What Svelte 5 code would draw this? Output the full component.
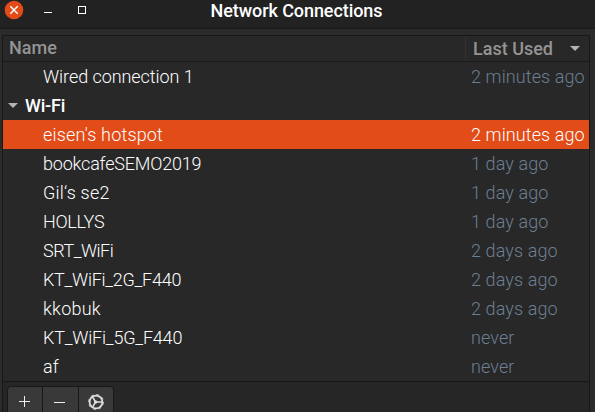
<script>
  const rows = [
    { name: 'Wired connection 1', used: '2 minutes ago', tracking: -0.06 },
    { name: 'Wi-Fi', group: true, tracking: -0.2 },
    { name: "eisen's hotspot", used: '2 minutes ago', selected: true, tracking: 0.18 },
    { name: 'bookcafeSEMO2019', used: '1 day ago', tracking: -0.19 },
    { name: 'Gil‘s se2', used: '1 day ago', tracking: 0.2 },
    { name: 'HOLLYS', used: '1 day ago', tracking: -0.3 },
    { name: 'SRT_WiFi', used: '2 days ago', tracking: -0.5 },
    { name: 'KT_WiFi_2G_F440', used: '2 days ago', tracking: -0.27 },
    { name: 'kkobuk', used: '2 days ago', tracking: 0.25 },
    { name: 'KT_WiFi_5G_F440', used: 'never', tracking: -0.2 },
    { name: 'af', used: 'never', tracking: 0 }
  ];
</script>

<div class="window">
  <header class="titlebar">
    <div class="controls">
      <button class="close" aria-label="Close">
        <svg width="20" height="20" viewBox="0 0 20 20"><circle cx="10" cy="10" r="9.3" fill="#e24c19" /><path d="M6.3 6.3l7.4 7.4M13.7 6.3l-7.4 7.4" stroke="#fff" stroke-width="1.5" /></svg>
      </button>
      <button class="min" aria-label="Minimize"><svg width="8" height="1"><path d="M0 .5h8" stroke="#fff" /></svg></button>
      <button class="max" aria-label="Maximize"><svg width="8" height="8"><rect x=".5" y=".5" width="7" height="7" fill="none" stroke="#fff" /></svg></button>
    </div>
    <h1>Network Connections</h1>
    <div class="balance"></div>
  </header>

  <main>
    <div class="columns">
      <div class="col-name">Name</div>
      <div class="col-used">Last Used <i class="arrow"></i></div>
    </div>
    <div class="list">
      {#each rows as row}
        <div class="row" class:selected={row.selected} class:group={row.group}>
          {#if row.group}<i class="arrow"></i>{/if}
          <span class="name" style:letter-spacing="{row.tracking}px">{row.name}</span>
          <span class="used">{row.used ?? ''}</span>
        </div>
      {/each}
    </div>
    <footer>
      <div class="buttons">
        <button aria-label="Add"><svg width="13" height="12"><path d="M0 5.5h11M5.5 0v11" stroke="#eee" /></svg></button>
        <button aria-label="Remove"><svg width="12" height="12"><path d="M0 6.5h11" stroke="#eee" /></svg></button>
        <button aria-label="Settings">
          <svg width="16" height="16" viewBox="0 0 16 16" fill="none" stroke="#ddd">
            <circle cx="8" cy="8" r="6.4" stroke-width="1.8" />
            <circle cx="8" cy="8" r="7.5" stroke-width=".8" stroke-dasharray="3 2.89" />
            <path d="M7.6 8H14M7.6 8L4.6 3M7.6 8L4.6 13" stroke-width="1.5" />
            <circle cx="7.6" cy="8" r="1.7" fill="#ddd" stroke="none" />
          </svg>
        </button>
      </div>
    </footer>
  </main>
</div>

<style>
  :global(body) { overflow: hidden; }
  .window {
    box-sizing: border-box; width: 595px; height: 412px; overflow: hidden;
    background: #2b2b2b; color: #fff;
    font: 300 18px/29px Roboto, "Liberation Sans", sans-serif;
    white-space: nowrap;
  }
  button { all: unset; display: flex; box-sizing: border-box; }
  svg { display: block; }
  .titlebar {
    height: 29px; box-sizing: border-box; display: flex;
    background: #222; border-bottom: 1px solid #181818;
  }
  .controls, .balance { width: 140px; display: flex; }
  .balance { width: 142px; }
  .close { margin-left: 4px; height: 20px; }
  .min { margin: 12px 0 0 20px; height: 1px; }
  .max { margin: 6px 0 0 26px; height: 8px; }
  h1 { flex: 1; margin: 0; font-size: 18px; font-weight: 500; letter-spacing: -.07px; line-height: 22px; text-align: center; color: #fff; }
  main {
    box-sizing: border-box; width: 588px; height: 377px; margin: 6px 0 0 2px;
    border: 1px solid #181818; border-bottom: 0; background: #282828;
  }
  .columns {
    display: flex; height: 26px; box-sizing: border-box;
    border-bottom: 1px solid #1a1a1a; color: #949494; font-weight: 500; line-height: 24px;
  }
  .col-name { width: 463px; box-sizing: border-box; padding-left: 6px; border-right: 1px solid #303030; }
  .col-used { flex: 1; display: flex; justify-content: space-between; align-items: center; padding: 0 9px 0 7px; }
  .arrow { width: 10px; height: 5px; background: #b4b4b4; clip-path: polygon(0 0, 100% 0, 50% 100%); }
  .row { height: 29px; display: flex; }
  .name { width: 428px; padding-left: 40px; }
  .used { color: #6c7f93; letter-spacing: .1px; }
  .selected { background: #e24c19; color: #fff; }
  .selected .used { color: #fff; }
  .group { align-items: center; font-weight: 500; color: #fff; }
  .group .arrow { margin-left: 5px; }
  .group .name { padding-left: 7px; }
  footer { border-top: 1px solid #181818; padding: 4px 0 0 4px; background: #262626; }
  .buttons {
    display: flex; width: 107px; height: 32px; box-sizing: border-box;
    border: 1px solid #181818; border-radius: 4px; background: #393939;
  }
  .buttons button { flex: 1; justify-content: center; padding-top: 9px; }
  .buttons button:last-child { padding-top: 7px; }
  .buttons button + button { border-left: 1px solid #181818; }
</style>
